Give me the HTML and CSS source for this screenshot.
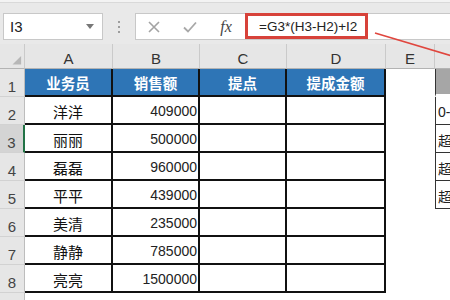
FILE: index.html
```html
<!DOCTYPE html>
<html>
  <head>
    <meta charset="UTF-8" />
    <title>提成计算</title>
    <link rel="stylesheet" href="styles.css">
  </head>
  <body>
    <div class="toolbar">
      <div class="namebox"><span>I3</span><span class="caret"></span></div>
      <div class="grip"><i></i><i></i><i></i></div>
      <div class="formula">
        <span class="fbtn">
          <svg width="12" height="12" viewBox="0 0 12 12"><path d="M1 1L11 11M11 1L1 11" stroke="#a3a3a3" stroke-width="1.6" fill="none"/></svg>
        </span>
        <span class="fbtn">
          <svg width="14" height="12" viewBox="0 0 14 12"><path d="M1 6.5L5 10.5L13 1.5" stroke="#a8a8a8" stroke-width="1.8" fill="none"/></svg>
        </span>
        <span class="fbtn fx">fx</span>
        <div class="ftext">=G3*(H3-H2)+I2</div>
      </div>
    </div>

    <div class="sheet">
      <!-- column headings -->
      <div class="ch corner">
        <svg width="25" height="25" viewBox="0 0 25 25"><polygon points="22,13 22,22 13,22" fill="#b7b7b7"/></svg>
      </div>
      <div class="ch">A</div>
      <div class="ch">B</div>
      <div class="ch">C</div>
      <div class="ch">D</div>
      <div class="ch">E</div>
      <div class="ch last"></div>

      <!-- row 1 -->
      <div class="rh">1</div>
      <div class="hd">业务员</div>
      <div class="hd">销售额</div>
      <div class="hd">提点</div>
      <div class="hd">提成金额</div>
      <div class="e"></div>
      <div class="f grey"></div>

      <!-- row 2 -->
      <div class="rh">2</div>
      <div class="t name">洋洋</div>
      <div class="t num">409000</div>
      <div class="t"></div>
      <div class="t"></div>
      <div class="e"></div>
      <div class="f">0-</div>

      <!-- row 3 -->
      <div class="rh sel">3</div>
      <div class="t name">丽丽</div>
      <div class="t num">500000</div>
      <div class="t"></div>
      <div class="t"></div>
      <div class="e"></div>
      <div class="f">超</div>

      <!-- row 4 -->
      <div class="rh">4</div>
      <div class="t name">磊磊</div>
      <div class="t num">960000</div>
      <div class="t"></div>
      <div class="t"></div>
      <div class="e"></div>
      <div class="f">超</div>

      <!-- row 5 -->
      <div class="rh">5</div>
      <div class="t name">平平</div>
      <div class="t num">439000</div>
      <div class="t"></div>
      <div class="t"></div>
      <div class="e"></div>
      <div class="f">超</div>

      <!-- row 6 -->
      <div class="rh">6</div>
      <div class="t name">美清</div>
      <div class="t num">235000</div>
      <div class="t"></div>
      <div class="t"></div>
      <div class="e"></div>
      <div class="e"></div>

      <!-- row 7 -->
      <div class="rh">7</div>
      <div class="t name">静静</div>
      <div class="t num">785000</div>
      <div class="t"></div>
      <div class="t"></div>
      <div class="e"></div>
      <div class="e"></div>

      <!-- row 8 -->
      <div class="rh">8</div>
      <div class="t name">亮亮</div>
      <div class="t num">1500000</div>
      <div class="t"></div>
      <div class="t"></div>
      <div class="e"></div>
      <div class="e"></div>

      <!-- row 9 -->
      <div class="rh"></div>
      <div class="e"></div>
      <div class="e"></div>
      <div class="e"></div>
      <div class="e"></div>
      <div class="e"></div>
      <div class="e"></div>
    </div>

    <!-- annotation arrow -->
    <svg class="pointer" width="450" height="300" viewBox="0 0 450 300">
      <line x1="375" y1="33" x2="452" y2="56" stroke="#e0463e" stroke-width="1.5"/>
    </svg>
  </body>
</html>
```

FILE: styles.css
```css
* {
  box-sizing: border-box;
}
body {
  margin: 0;
  width: 450px;
  height: 300px;
  overflow: hidden;
  position: relative;
  background: #fff;
  font-family: "Liberation Sans", "Noto Sans CJK SC", sans-serif;
}

/* formula bar */
.toolbar {
  height: 44px;
  display: flex;
  align-items: flex-start;
  padding: 13px 0 0 3px;
  background: linear-gradient(#f3f3f3 0 2px, #d9d9d9 2px 3px, #e9e9e9 3px);
}
.namebox {
  width: 100px;
  height: 27px;
  background: #fff;
  border: 1px solid #c8c8c8;
  display: flex;
  align-items: center;
  justify-content: space-between;
  padding: 0 8px 0 6px;
  font-size: 15px;
  color: #222;
}
.caret {
  width: 0;
  height: 0;
  border-left: 4px solid transparent;
  border-right: 4px solid transparent;
  border-top: 5px solid #777;
}
.grip {
  width: 32px;
  height: 27px;
  display: flex;
  flex-direction: column;
  align-items: center;
  justify-content: center;
  gap: 3px;
}
.grip i {
  width: 2px;
  height: 2px;
  background: #9d9d9d;
}
.formula {
  flex: 1;
  height: 27px;
  background: #fff;
  border: 1px solid #c8c8c8;
  border-right: none;
  display: flex;
  align-items: center;
}
.fbtn {
  width: 36px;
  display: flex;
  justify-content: center;
  align-items: center;
}
.fx {
  font-family: "Liberation Serif", serif;
  font-style: italic;
  font-size: 16px;
  color: #444;
}
.ftext {
  align-self: flex-start;
  margin: -1px 0 0 1px;
  width: 123px;
  height: 26px;
  border: 3px solid #d7423a;
  padding-left: 11px;
  display: flex;
  align-items: center;
  font-size: 13.5px;
  color: #222;
}

/* sheet grid */
.sheet {
  display: grid;
  grid-template-columns: 25px 88px 87px 87px 99px 49px 15px;
  grid-template-rows: 25px repeat(9, 28px);
}
.sheet > div {
  display: flex;
  align-items: center;
  overflow: hidden;
  white-space: nowrap;
}
.ch {
  background: #e6e6e6;
  border-right: 1px solid #cacaca;
  border-bottom: 1px solid #b3b3b3;
  justify-content: center;
  align-items: flex-end !important;
  padding-bottom: 1px;
  font-size: 15px;
  color: #333;
}
.ch.corner {
  padding: 0;
}
.ch.last {
  border-right: none;
}
.rh {
  background: #e6e6e6;
  border-right: 1px solid #bdbdbd;
  border-bottom: 1px solid #d2d2d2;
  justify-content: center;
  align-items: flex-end !important;
  padding-bottom: 1px;
  font-size: 15px;
  color: #444;
}
.rh.sel {
  background: #d4d4d4;
  border-right: 2px solid #217346;
}
.hd {
  background: #2e75b6;
  color: #fff;
  font-weight: bold;
  font-size: 14.5px;
  justify-content: center;
  border-right: 2px solid #111;
  border-bottom: 2px solid #111;
}
.t {
  border-right: 2px solid #111;
  border-bottom: 2px solid #111;
  padding-top: 2px;
}
.name {
  justify-content: center;
  font-size: 15px;
  color: #111;
}
.num {
  justify-content: flex-end;
  padding-right: 1px;
  font-size: 14px;
  color: #222;
}
.f {
  border-left: 1px solid #333;
  border-bottom: 1px solid #333;
  padding: 2px 0 0 2px;
  font-size: 14px;
  color: #222;
}
.f.grey {
  background: #a6a6a6;
  border-bottom: 3px solid #fff;
}

.pointer {
  position: absolute;
  top: 0;
  left: 0;
  pointer-events: none;
}
```
